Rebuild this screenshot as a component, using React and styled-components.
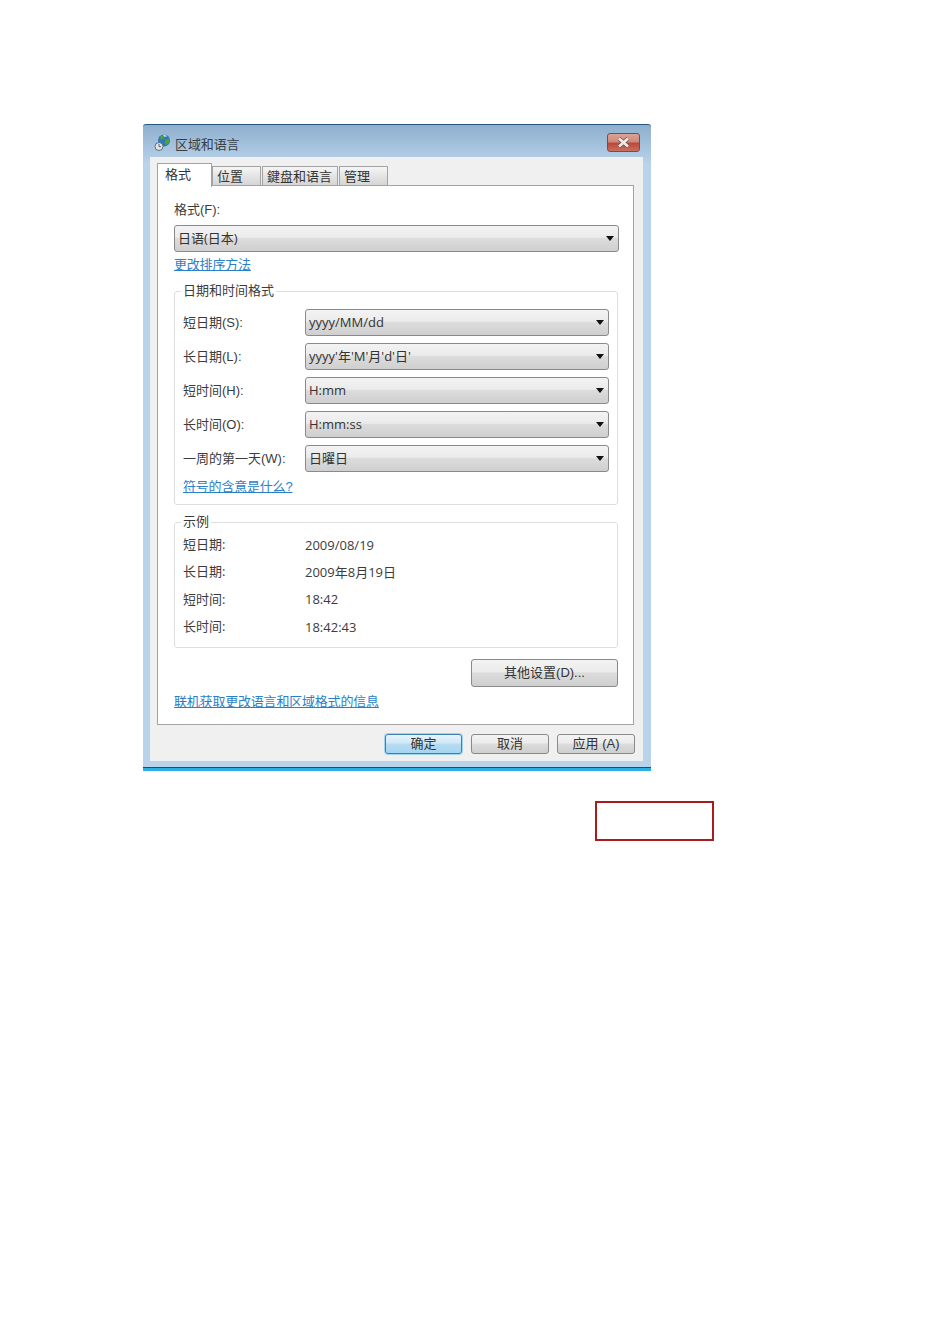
import React from 'react'
import styled, { createGlobalStyle } from 'styled-components'

const GlobalStyle = createGlobalStyle`
  html, body {
    margin: 0;
    padding: 0;
    background: #fff;
  }
  body {
    font-family: "Liberation Sans", "Noto Sans CJK SC", sans-serif;
    font-size: 13px;
    color: #333;
  }
`

const Page = styled.div`
  width: 950px;
  height: 1344px;
  padding: 124px 0 0 143px;
  box-sizing: border-box;
  overflow: hidden;
`

const Window = styled.div`
  width: 508px;
  height: 647px;
  box-sizing: border-box;
  display: flex;
  flex-direction: column;
  background: linear-gradient(#8eafce, #b8d3ea 6%, #b8d3ea);
  border-top: 1px solid #25577f;
  border-bottom: 3px solid #2cb0e2;
  border-radius: 3px 3px 0 0;
  box-shadow: inset 0 -1px 0 #14506f;
`

const TitleBar = styled.div`
  height: 32px;
  flex: none;
  display: flex;
  align-items: center;
  padding: 3px 11px 0 11px;
  box-sizing: border-box;
`

const TitleText = styled.span`
  margin-left: 4px;
  padding-top: 3px;
  font-size: 13px;
  line-height: 17px;
  letter-spacing: -0.1px;
  color: #3a3f45;
`

const CloseButton = styled.div`
  margin-left: auto;
  width: 33px;
  height: 19px;
  box-sizing: border-box;
  display: flex;
  align-items: center;
  justify-content: center;
  border: 1px solid #7d4a48;
  border-radius: 3px;
  background: linear-gradient(#d9a396, #cf8a7c 45%, #b9493c 55%, #c9705f);
`

const Client = styled.div`
  flex: none;
  height: 604px;
  margin: 0 8px 0 7px;
  padding: 6px 9px 0 7px;
  box-sizing: border-box;
  background: #f0f0f0;
`

const TabRow = styled.div`
  display: flex;
  align-items: flex-end;
  height: 23px;
  position: relative;
  z-index: 1;
`

const Tab = styled.div`
  box-sizing: border-box;
  width: ${p => p.$width}px;
  height: ${p => (p.$active ? 24 : 20)}px;
  margin-right: ${p => p.$gap || 0}px;
  padding: ${p => (p.$active ? '2px 0 0 7px' : '1px 0 0 4px')};
  font-size: 13px;
  line-height: 17px;
  white-space: nowrap;
  border: 1px solid #a3a3a3;
  border-bottom: ${p => (p.$active ? 'none' : '1px solid #a3a3a3')};
  background: ${p => (p.$active ? '#fff' : 'linear-gradient(#f6f6f6, #e4e4e4 50%, #d6d6d6)')};
  margin-bottom: ${p => (p.$active ? '-1px' : '0')};
`

const TabPanel = styled.div`
  height: 540px;
  margin-top: -1px;
  padding: 15px 15px 0 16px;
  box-sizing: border-box;
  background: #fff;
  border: 1px solid #a3a3a3;
  display: flex;
  flex-direction: column;
`

const Label = styled.div`
  font-size: 13px;
  line-height: 17px;
  color: #3c3c3c;
`

const SelectBox = styled.div`
  box-sizing: border-box;
  height: 27px;
  width: ${p => p.$width}px;
  margin-top: ${p => p.$top || 0}px;
  flex: none;
  display: flex;
  align-items: center;
  justify-content: space-between;
  padding: 0 4px 2px 3px;
  border: 1px solid #8a8a8a;
  border-radius: 3px;
  background: linear-gradient(#f3f3f3, #ebebeb 45%, #dcdcdc 50%, #cfcfcf);
  font-family: "Open Sans", "Noto Sans CJK SC", sans-serif;
  font-size: 13px;
  color: #333;
`

const Arrow = styled.span`
  width: 0;
  height: 0;
  margin-top: 2px;
  border-left: 4.5px solid transparent;
  border-right: 4.5px solid transparent;
  border-top: 5px solid #111;
`

const TextLink = styled.a`
  color: #2a7fc9;
  text-decoration: underline;
  font-size: 13px;
  line-height: 17px;
  letter-spacing: -0.2px;
  display: block;
  margin-top: ${p => p.$top || 0}px;
`

const Group = styled.div`
  box-sizing: border-box;
  position: relative;
  height: ${p => p.$height}px;
  margin-top: ${p => p.$top}px;
  padding: ${p => p.$pad};
  border: 1px solid #dcdfe2;
  border-radius: 3px;
`

const Legend = styled.span`
  position: absolute;
  top: -10px;
  left: 6px;
  padding: 0 2px;
  background: #fff;
  font-size: 13px;
  line-height: 17px;
  color: #3c3c3c;
`

const FormatRow = styled.div`
  display: flex;
  align-items: center;
  height: 27px;
  margin-bottom: 7px;
`

const RowLabel = styled.div`
  width: 122px;
  padding-bottom: 2px;
  font-size: 13px;
  color: #3c3c3c;
  white-space: nowrap;
  flex: none;
`

const SampleRow = styled.div`
  display: flex;
  align-items: center;
  height: 17px;
  margin-bottom: 10.4px;
  font-family: "Open Sans", "Noto Sans CJK SC", sans-serif;
  font-size: 13px;
  color: #3c3c3c;
`

const ActionRow = styled.div`
  display: flex;
  justify-content: flex-end;
  margin-top: 11px;
`

const Button = styled.div`
  box-sizing: border-box;
  width: ${p => p.$width}px;
  height: ${p => p.$height}px;
  margin-right: ${p => (p.$primary ? 1 : 0)}px;
  display: flex;
  align-items: center;
  justify-content: center;
  padding-bottom: 4px;
  font-size: 13px;
  color: #333;
  border: 1px solid ${p => (p.$primary ? '#3c7fb1' : '#8a8a8a')};
  border-radius: 3px;
  background: ${p => (p.$primary
    ? 'linear-gradient(#e6f4fb, #cfe8f6 45%, #b5dcf1 50%, #a6d4ee)'
    : 'linear-gradient(#f3f3f3, #ebebeb 45%, #dcdcdc 50%, #cfcfcf)')};
  box-shadow: ${p => (p.$primary ? '0 0 0 1px #9fd4ef' : 'none')};
`

const Footer = styled.div`
  display: flex;
  justify-content: flex-end;
  gap: 8px;
  margin-right: -1px;
  padding-top: 9px;
`

const RedBox = styled.div`
  box-sizing: border-box;
  width: 119px;
  height: 40px;
  margin: 30px 0 0 452px;
  border: 2px solid #a81c1c;
`

const GlobeIcon = () => (
  <svg width="17" height="18" viewBox="0 0 17 18">
    <circle cx="10" cy="6.5" r="6" fill="#2f78bd" />
    <path d="M6 2.5c2-1.5 4-1.5 5-.5l-1 2.500-3 1.500zM11.500 5.500l3.500-1 .5 3.500-3 3-2-2z" fill="#4f9f45" />
    <path d="M9 .8c1.800 0 3.300.6 4.200 1.700l-2.700.3z" fill="#cbe6f7" />
    <circle cx="5" cy="12.500" r="4" fill="#e4e6e8" stroke="#5f6d78" />
    <path d="M5 10v2.700h2" fill="none" stroke="#46525c" strokeWidth="0.9" />
  </svg>
)

const CloseGlyph = () => (
  <svg width="15" height="11" viewBox="0 0 15 11">
    <path d="M3 1.500l9 8M12 1.500l-9 8" stroke="#7a4038" strokeWidth="4" />
    <path d="M3 1.500l9 8M12 1.500l-9 8" stroke="#ececea" strokeWidth="2.800" />
  </svg>
)

const formats = [
  ['短日期(S):', 'yyyy/MM/dd'],
  ['长日期(L):', "yyyy'年'M'月'd'日'"],
  ['短时间(H):', 'H:mm'],
  ['长时间(O):', 'H:mm:ss'],
  ['一周的第一天(W):', '日曜日'],
]

const samples = [
  ['短日期:', '2009/08/19'],
  ['长日期:', '2009年8月19日'],
  ['短时间:', '18:42'],
  ['长时间:', '18:42:43'],
]

export default function App() {
  return (
    <Page>
      <GlobalStyle />
      <Window>
        <TitleBar>
          <GlobeIcon />
          <TitleText>区域和语言</TitleText>
          <CloseButton><CloseGlyph /></CloseButton>
        </TitleBar>
        <Client>
          <TabRow>
            <Tab $active $width={55}>格式</Tab>
            <Tab $width={49} $gap={1}>位置</Tab>
            <Tab $width={76} $gap={1}>鍵盘和语言</Tab>
            <Tab $width={49}>管理</Tab>
          </TabRow>
          <TabPanel>
            <Label>格式(F):</Label>
            <SelectBox $width={445} $top={7}>
              <span>日语(日本)</span>
              <Arrow />
            </SelectBox>
            <TextLink $top={4}>更改排序方法</TextLink>
            <Group $height={214} $top={18} $pad="17px 9px 0 8px">
              <Legend>日期和时间格式</Legend>
              {formats.map(([label, value]) => (
                <FormatRow key={label}>
                  <RowLabel>{label}</RowLabel>
                  <SelectBox $width={304}>
                    <span>{value}</span>
                    <Arrow />
                  </SelectBox>
                </FormatRow>
              ))}
              <TextLink $top={-1}>符号的含意是什么?</TextLink>
            </Group>
            <Group $height={126} $top={17} $pad="13px 9px 0 8px">
              <Legend>示例</Legend>
              {samples.map(([label, value]) => (
                <SampleRow key={label}>
                  <RowLabel>{label}</RowLabel>
                  <span>{value}</span>
                </SampleRow>
              ))}
            </Group>
            <ActionRow>
              <Button $width={147} $height={28}>其他设置(D)...</Button>
            </ActionRow>
            <TextLink $top={6}>联机获取更改语言和区域格式的信息</TextLink>
          </TabPanel>
          <Footer>
            <Button $primary $width={77} $height={20}>确定</Button>
            <Button $width={78} $height={20}>取消</Button>
            <Button $width={78} $height={20}>应用 (A)</Button>
          </Footer>
        </Client>
      </Window>
      <RedBox />
    </Page>
  )
}
